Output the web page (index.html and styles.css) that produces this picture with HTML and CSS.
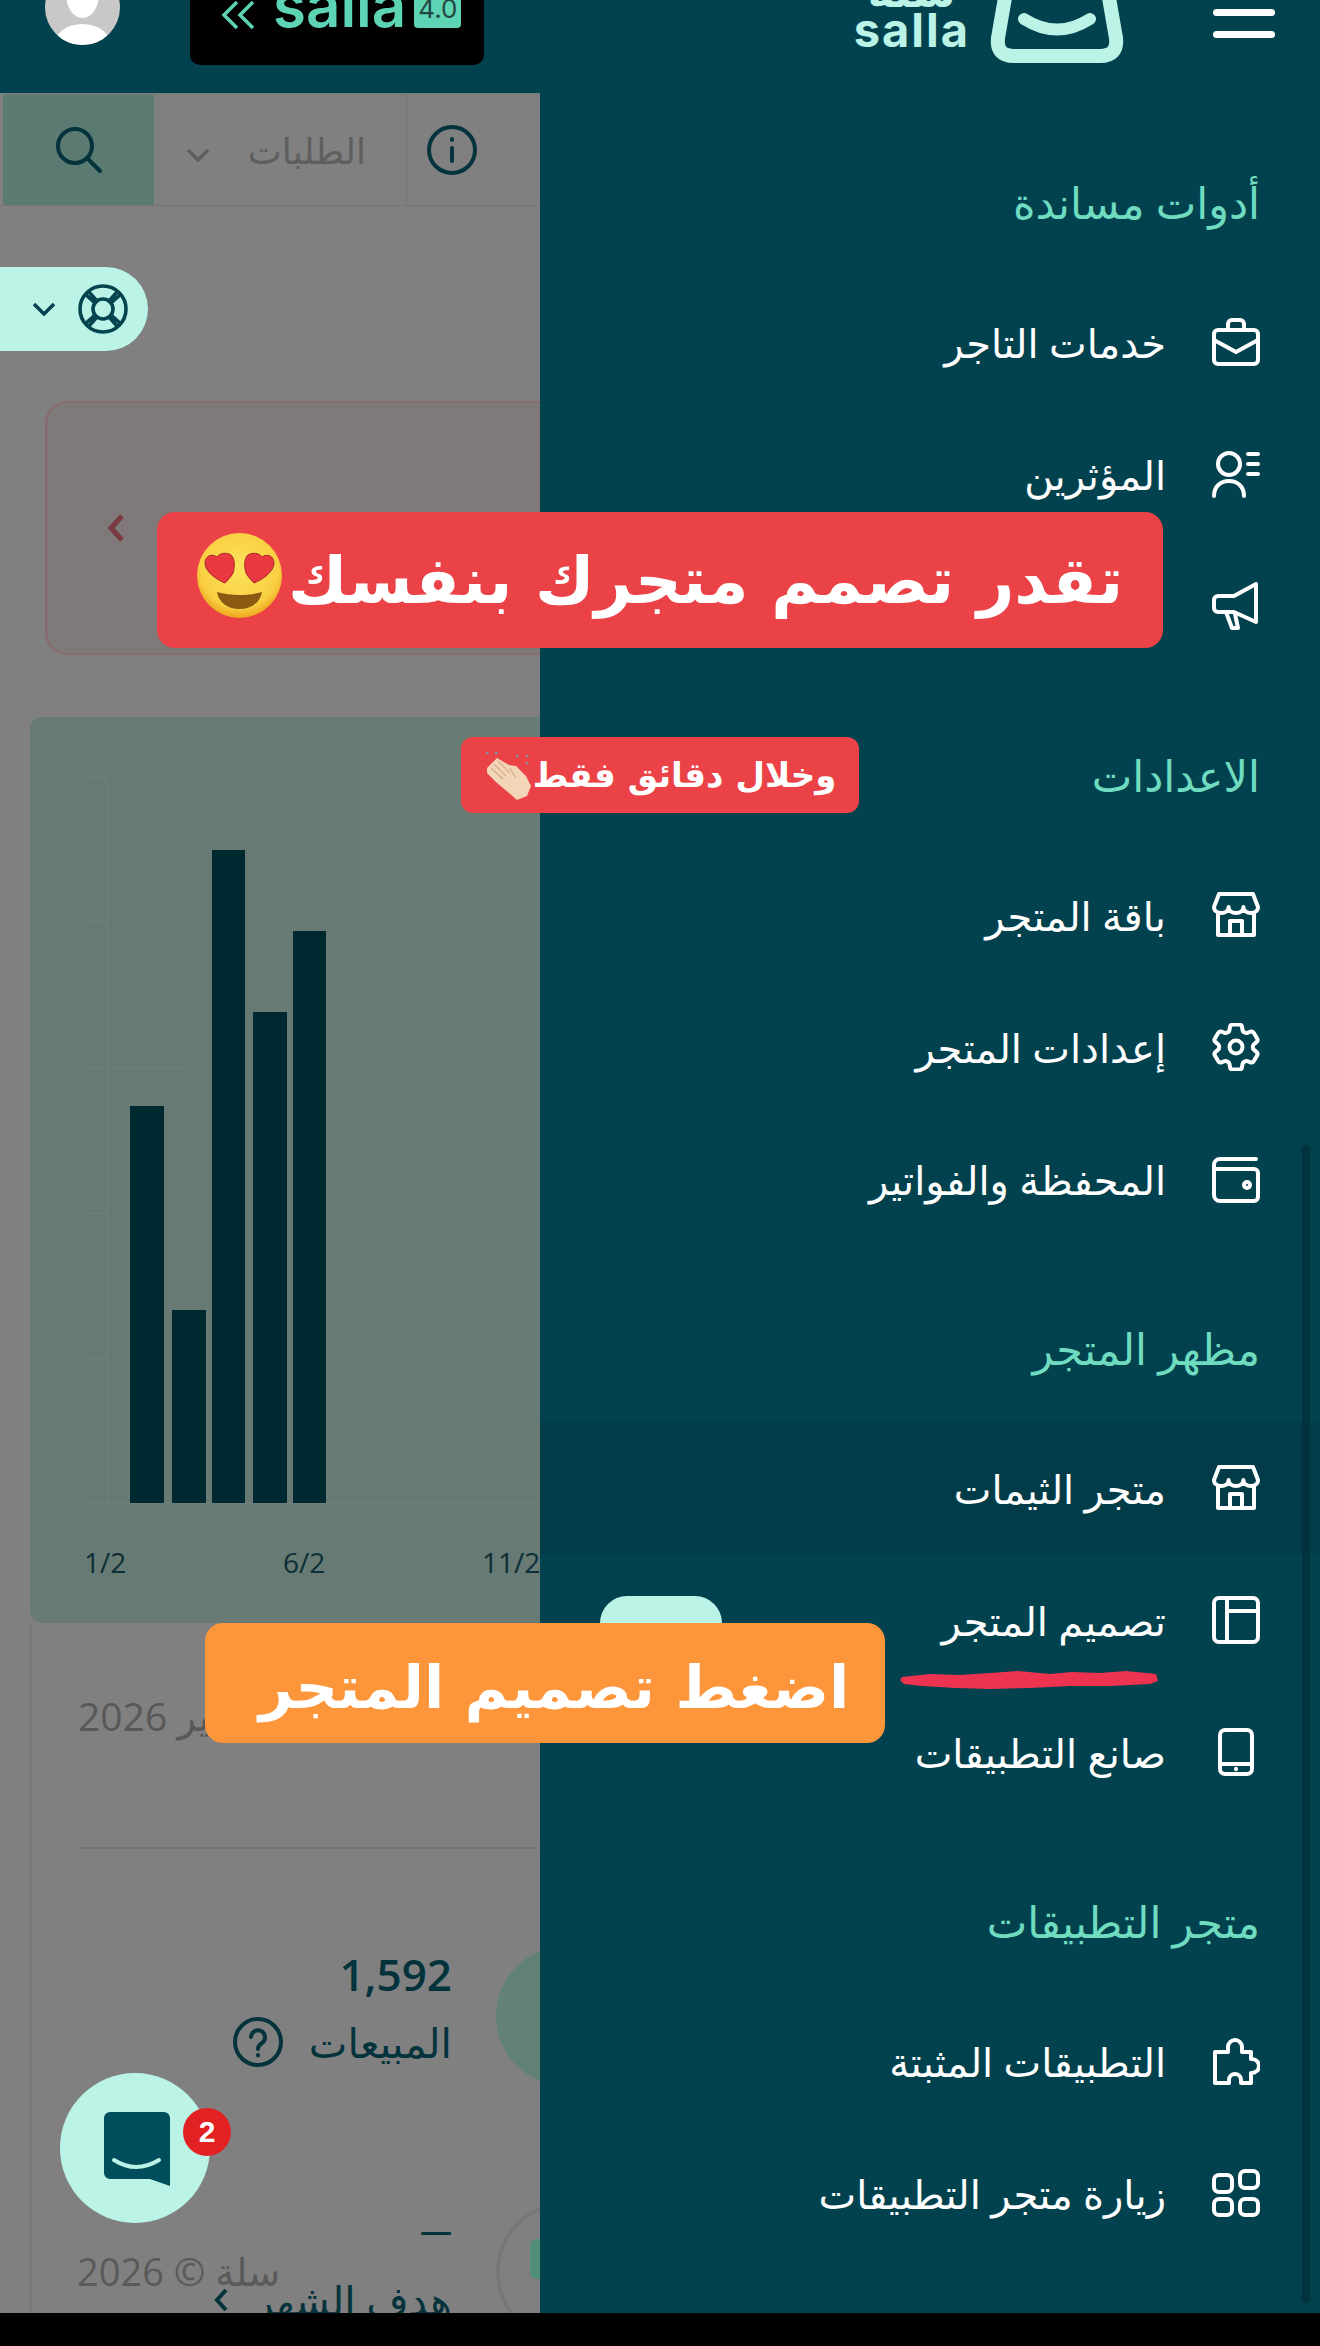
FILE: index.html
```html
<!DOCTYPE html>
<html lang="ar" dir="rtl">
<head>
    <meta charset="UTF-8">
    <meta name="viewport" content="width=device-width, initial-scale=1.0">
    <title>سلة - لوحة التحكم</title>
    <link rel="stylesheet" href="styles.css">
</head>
<body>
    <div class="screen">
        <header class="topbar">
            <div class="burger"><span></span><span></span></div>
            <div class="brand">
                <svg class="brand-bag" viewBox="0 0 134 63" fill="none" stroke="#bcf3e7" stroke-linecap="round">
                    <path stroke-width="14" d="M16 -8L8 38Q6 56 24 56H110Q128 56 126 38L118 -8"/>
                    <path stroke-width="12" d="M34 19Q67 40 100 19"/>
                </svg>
                <div class="brand-words">
                    <span class="brand-ar">سلة</span>
                    <span class="brand-en">salla</span>
                </div>
            </div>
            <div class="version" dir="ltr">
                <svg class="version-arrows" viewBox="0 0 34 30" fill="none" stroke="#5dd5b5" stroke-width="3.500"><path d="M16 1L3 14l13 13M32 1L19 14l13 13"/></svg>
                <span class="version-name">salla</span>
                <span class="version-chip">4.0</span>
            </div>
            <div class="avatar"><span class="avatar-head"></span><span class="avatar-body"></span></div>
        </header>

        <div class="content">
            <aside class="drawer">
                <section class="group">
                    <h3>أدوات مساندة</h3>
                    <a class="item">
                        <svg class="ico" viewBox="0 0 24 24"><path d="M8 6V3a2 2 0 0 1 2-2h4a2 2 0 0 1 2 2v3"/><rect x="1" y="6" width="22" height="17" rx="2"/><path d="M1 11l11 6 11-6"/></svg>
                        <span>خدمات التاجر</span>
                    </a>
                    <a class="item">
                        <svg class="ico" viewBox="0 0 24 24"><circle cx="8.5" cy="7" r="5.500"/><path d="M1 23c0-5 3.500-7.500 7.500-7.500S16 18 16 23"/><path d="M18 2h5M18 7h5M18 12h5"/></svg>
                        <span>المؤثرين</span>
                    </a>
                    <a class="item">
                        <svg class="ico" viewBox="0 0 24 24"><path d="M3 7h8l11-6v19l-11-5H3a2 2 0 0 1-2-2V9a2 2 0 0 1 2-2z"/><path d="M7 15l3 8h3l-1.500-7"/></svg>
                    </a>
                </section>
                <section class="group">
                    <h3>الاعدادات</h3>
                    <a class="item">
                        <svg class="ico" viewBox="0 0 24 24"><path d="M3.500 1.500h17L23 8c0 2-1.700 3-3.600 3s-3.700-1-3.700-3c0 2-1.700 3-3.700 3s-3.700-1-3.700-3c0 2-1.700 3-3.600 3S1 10 1 8z"/><path d="M3 11v11h18V11M9 22v-7h6v7"/></svg>
                        <span>باقة المتجر</span>
                    </a>
                    <a class="item">
                        <svg class="ico" viewBox="2.6 2.4 18.8 19.2"><path stroke-width="1.6" d="M9.594 3.94c.09-.542.56-.94 1.11-.94h2.593c.55 0 1.02.398 1.11.94l.213 1.281c.063.374.313.686.645.87.074.04.147.083.22.127.325.196.72.257 1.075.124l1.217-.456a1.125 1.125 0 0 1 1.37.49l1.296 2.247a1.125 1.125 0 0 1-.26 1.431l-1.003.827c-.293.241-.438.613-.43.992a7.723 7.723 0 0 1 0 .255c-.008.378.137.75.43.991l1.004.827c.424.35.534.955.26 1.43l-1.298 2.247a1.125 1.125 0 0 1-1.369.491l-1.217-.456c-.355-.133-.75-.072-1.076.124a6.47 6.47 0 0 1-.22.128c-.331.183-.581.495-.644.869l-.213 1.281c-.09.543-.56.94-1.11.94h-2.594c-.55 0-1.019-.398-1.11-.94l-.213-1.281c-.062-.374-.312-.686-.644-.87a6.52 6.52 0 0 1-.22-.127c-.325-.196-.72-.257-1.076-.124l-1.217.456a1.125 1.125 0 0 1-1.369-.49l-1.297-2.247a1.125 1.125 0 0 1 .26-1.431l1.004-.827c.292-.24.437-.613.43-.991a6.932 6.932 0 0 1 0-.255c.007-.38-.138-.751-.43-.992l-1.004-.827a1.125 1.125 0 0 1-.26-1.43l1.297-2.247a1.125 1.125 0 0 1 1.37-.491l1.216.456c.356.133.751.072 1.076-.124.072-.044.146-.086.22-.128.332-.183.582-.495.644-.869l.214-1.28Z"/><circle stroke-width="1.6" cx="12" cy="12" r="2.6"/></svg>
                        <span>إعدادات المتجر</span>
                    </a>
                    <a class="item">
                        <svg class="ico" viewBox="0 0 24 24"><path d="M22 2H4a3 3 0 0 0-3 3v15a3 3 0 0 0 3 3h17a2 2 0 0 0 2-2V9a2 2 0 0 0-2-2H1"/><circle cx="17.5" cy="15" r="1.500"/></svg>
                        <span>المحفظة والفواتير</span>
                    </a>
                </section>
                <section class="group">
                    <h3>مظهر المتجر</h3>
                    <a class="item item-active">
                        <svg class="ico" viewBox="0 0 24 24"><path d="M3.500 1.500h17L23 8c0 2-1.700 3-3.600 3s-3.700-1-3.700-3c0 2-1.700 3-3.700 3s-3.700-1-3.700-3c0 2-1.700 3-3.600 3S1 10 1 8z"/><path d="M3 11v11h18V11M9 22v-7h6v7"/></svg>
                        <span>متجر الثيمات</span>
                    </a>
                    <a class="item">
                        <svg class="ico" viewBox="0 0 24 24"><rect x="1" y="1" width="22" height="22" rx="2.500"/><path d="M7.500 1v22M7.500 7.500H23"/></svg>
                        <span>تصميم المتجر</span>
                        <em class="new-tag">جديد</em>
                    </a>
                    <a class="item">
                        <svg class="ico" viewBox="0 0 24 24"><rect x="4" y="1" width="16" height="22" rx="2.500"/><path d="M4 18h16M12 20.4v.2"/></svg>
                        <span>صانع التطبيقات</span>
                    </a>
                </section>
                <section class="group">
                    <h3>متجر التطبيقات</h3>
                    <a class="item">
                        <svg class="ico" viewBox="0 0 24 24"><path d="M1.500 23V7.500H8V5a3.500 3.500 0 1 1 7 0v2.500h4.500V11h.5a3.500 3.500 0 1 1 0 7h-.5v5h-5v-1.500a3 3 0 0 0-6 0V23z"/></svg>
                        <span>التطبيقات المثبتة</span>
                    </a>
                    <a class="item">
                        <svg class="ico" viewBox="0 0 24 24"><rect x="1" y="3" width="9" height="8.500" rx="2.500"/><rect x="14" y="1" width="9" height="8.500" rx="2.500"/><rect x="1" y="15" width="9" height="8" rx="2.500"/><rect x="14" y="15" width="9" height="8" rx="2.500"/></svg>
                        <span>زيارة متجر التطبيقات</span>
                    </a>
                </section>
                <div class="scrollbar"></div>
            </aside>

            <main class="dash">
                <div class="searchbar">
                    <div class="sb-info">
                        <svg viewBox="0 0 50 50" fill="none" stroke="#04333c" stroke-width="4" stroke-linecap="round"><circle cx="25" cy="25" r="23"/><path d="M25 23v13M25 14v1"/></svg>
                    </div>
                    <div class="sb-select">
                        <span>الطلبات</span>
                        <svg viewBox="0 0 24 14" fill="none" stroke="#5e5e5e" stroke-width="3.500"><path d="M2 2l10 10L22 2"/></svg>
                    </div>
                    <div class="sb-btn">
                        <svg viewBox="0 0 46 46" fill="none" stroke="#04333c" stroke-width="4" stroke-linecap="round"><circle cx="19" cy="19" r="17"/><path d="M31 31l13 13"/></svg>
                    </div>
                </div>

                <div class="help-pill">
                    <svg class="help-buoy" viewBox="0 0 50 50" fill="none" stroke="#04444f" stroke-width="3.6"><circle cx="25" cy="25" r="23"/><circle cx="25" cy="25" r="10"/><path d="M10 7l9 10M7 10l10 9M40 7l-9 10M43 10l-10 9M10 43l9-10M7 40l10-9M40 43l-9-10M43 40l-10-9"/></svg>
                    <svg class="help-arrow" viewBox="0 0 24 14" fill="none" stroke="#04444f" stroke-width="3.500"><path d="M2 2l10 10L22 2"/></svg>
                </div>

                <div class="promo">
                    <svg viewBox="0 0 18 30" fill="none" stroke="#7a3a42" stroke-width="5"><path d="M15 3L4 15l11 12"/></svg>
                </div>

                <div class="chart-card">
                    <svg viewBox="30 717 510 906">
                        <path class="chart-axis" d="M107 777V1503H540M88 777h19M88 922h19M88 1068h102M88 1213h19M88 1359h19M88 1503h19"/>
                        <rect class="chart-bar" x="130" y="1106" width="34" height="397"/>
                        <rect class="chart-bar" x="172" y="1310" width="34" height="193"/>
                        <rect class="chart-bar" x="212" y="850" width="33" height="653"/>
                        <rect class="chart-bar" x="253" y="1012" width="34" height="491"/>
                        <rect class="chart-bar" x="293" y="931" width="33" height="572"/>
                        <text class="chart-label" x="84" y="1573">1/2</text>
                        <text class="chart-label" x="283" y="1573">6/2</text>
                        <text class="chart-label" x="482" y="1573">11/2</text>
                    </svg>
                </div>

                <div class="lower">
                    <div class="date-row"><span>فبراير 2026</span></div>
                    <div class="stat stat-sales">
                        <div class="stat-circle"></div>
                        <div class="stat-text">
                            <strong>1,592</strong>
                            <div class="stat-label">
                                <span>المبيعات</span>
                                <svg viewBox="0 0 50 50" fill="none" stroke="#04333c" stroke-width="4" stroke-linecap="round"><circle cx="25" cy="25" r="23"/><path d="M18 20a7 7 0 1 1 11 6c-3 2-4 3-4 6M25 38v.5"/></svg>
                            </div>
                        </div>
                    </div>
                    <div class="stat stat-goal">
                        <div class="stat-ring"><span class="stat-ring-mark"></span></div>
                        <div class="stat-text">
                            <strong>—</strong>
                            <div class="stat-label">
                                <span>هدف الشهر</span>
                                <svg class="goal-arrow" viewBox="0 0 14 24" fill="none" stroke="#04333c" stroke-width="4"><path d="M12 2L3 12l9 10"/></svg>
                            </div>
                        </div>
                    </div>
                    <p class="copyright">سلة © 2026</p>
                </div>
            </main>
        </div>

        <button class="chat">
            <svg viewBox="0 0 66 74"><path fill="#004e5c" d="M6 0h54a6 6 0 0 1 6 6v68l-20-7H6a6 6 0 0 1-6-6V6a6 6 0 0 1 6-6z"/><path fill="none" stroke="#bcf3e7" stroke-width="4" stroke-linecap="round" d="M10 48Q32 62 55 48"/></svg>
            <span class="chat-count">2</span>
        </button>

        <div class="note note-main">
            <span>تقدر تصمم متجرك بنفسك</span>
            <svg class="emoji-love" viewBox="0 0 85 85">
                <defs><radialGradient id="face" cx="50%" cy="42%" r="58%"><stop offset="0%" stop-color="#fde25c"/><stop offset="80%" stop-color="#f9cf42"/><stop offset="100%" stop-color="#eda51c"/></radialGradient></defs>
                <circle cx="42.5" cy="42.5" r="42.5" fill="url(#face)"/>
                <path fill="#ea3840" stroke="#a82a2a" stroke-width="1" d="M28 50C18 46 8 38 8 30C8 23 15 20 20 24C22 20 30 19 34 22C38 25 38 34 36 40C34 44 30 48 28 50Z"/>
                <path fill="#ea3840" stroke="#a82a2a" stroke-width="1" d="M57 50C67 46 77 38 77 30C77 23 70 20 65 24C63 20 55 19 51 22C47 25 47 34 49 40C51 44 55 48 57 50Z"/>
                <path fill="#8a5a12" d="M20 59C34 63 51 63 65 59C63 70 54 76 42.5 76C31 76 22 70 20 59Z"/>
            </svg>
        </div>
        <div class="note note-small">
            <span>وخلال دقائق فقط</span>
            <svg class="emoji-clap" viewBox="0 0 49 51">
                <path fill="#f3d5b8" d="M3 18L13 8L25 15L32 16L42 26L47 36L43 46L33 50L25 43L13 33L3 23Z"/>
                <path fill="none" stroke="#d6ab8b" stroke-width="1.2" d="M7 18L19 29M10 14L22 26M14 11L26 23M26 18L32 28"/>
                <path fill="none" stroke="#8a8f98" stroke-width="2.500" stroke-linecap="round" d="M3 3h.5M12 3h.5M33 6h.5M43 6h.5M43 13h.5"/>
            </svg>
        </div>
        <div class="note note-action"><span>اضغط تصميم المتجر</span></div>
        <svg class="scribble" viewBox="0 0 258 22"><path fill="#ed3350" d="M2 8L30 5L60 6L90 4L118 2L150 5L172 3L200 4L226 2L256 5L258 12L250 15L210 17L170 17L130 19L90 20L56 19L22 17L4 15L0 11Z"/></svg>
    </div>
    <div class="navbar"></div>
</body>
</html>
```

FILE: styles.css
```css
* { box-sizing: border-box; }
html, body { margin: 0; padding: 0; }
body { width: 1320px; height: 2346px; background: #000; overflow: hidden; font-family: "Open Sans", "DejaVu Sans", sans-serif; }
h3, p { margin: 0; font-weight: normal; }

.screen { position: relative; height: 2313px; overflow: hidden; background: #02424f; }

/* top bar, its contents are cut by the top of the screen */
.topbar { height: 93px; display: flex; align-items: flex-end; padding: 0 45px; overflow: hidden; }
.burger { width: 62px; margin-bottom: 55px; display: flex; flex-direction: column; gap: 15px; flex-shrink: 0; }
.burger span { height: 7px; border-radius: 4px; background: #fff; }
.brand { display: flex; align-items: flex-end; gap: 20px; margin: 0 89px 30px 0; }
.brand-bag { width: 134px; height: 63px; flex-shrink: 0; }
.brand-words { display: flex; flex-direction: column; align-items: center; color: #bcf3e7; font-weight: bold; margin-bottom: 13px; }
.brand-ar { font-size: 44px; line-height: 12px; margin-bottom: 14px; }
.brand-en { font-family: "Inter", sans-serif; font-size: 47px; line-height: 40px; letter-spacing: 2px; }
.version { width: 294px; height: 100px; margin: 0 auto 28px 0; background: #000; border-radius: 0 0 10px 10px; display: flex; align-items: flex-end; padding: 0 0 32px 30px; color: #5dd5b5; flex-shrink: 0; }
.version-arrows { width: 36px; height: 30px; margin-bottom: 2px; }
.version-name { margin-left: 17px; font-family: "Inter", sans-serif; font-weight: 600; font-size: 60px; line-height: 56px; }
.version-chip { margin-left: 8px; background: #5dd5b5; color: #24463f; font-family: "Inter", sans-serif; font-size: 26px; padding: 4px 4px; border-radius: 4px; margin-bottom: 5px; }
.avatar { position: relative; width: 75px; height: 75px; border-radius: 50%; background: #c8c8c8; overflow: hidden; margin: 0 70px 48px 0; flex-shrink: 0; }
.avatar-head { position: absolute; left: 21px; top: 0; width: 33px; height: 48px; border-radius: 50%; background: #fff; }
.avatar-body { position: absolute; left: 10px; top: 54px; width: 55px; height: 40px; border-radius: 50%; background: #fff; }

.content { display: flex; height: 2220px; }

/* side menu */
.drawer { position: relative; width: 780px; padding-top: 41px; flex-shrink: 0; background: #02424f; z-index: 2; }
.group { margin-bottom: 35px; }
.group h3 { height: 142px; display: flex; align-items: center; padding: 0 60px 6px; color: #6fdcc0; font-size: 43px; }
.item { position: relative; height: 132px; display: flex; align-items: center; gap: 46px; padding: 0 60px; color: #fff; font-size: 40px; }
.item-active { background: #023c48; }
.ico { width: 48px; height: 48px; flex-shrink: 0; fill: none; stroke: #fff; stroke-width: 2; stroke-linecap: round; stroke-linejoin: round; }
.new-tag { position: absolute; left: 60px; top: 42px; width: 122px; height: 54px; border-radius: 27px; background: #bcf3e7; color: #02424f; font-style: normal; font-size: 24px; text-align: center; line-height: 64px; }
.scrollbar { position: absolute; left: 762px; top: 1052px; width: 8px; height: 1158px; border-radius: 4px; background: #01333f; }

/* dashboard behind the dim layer */
.dash { position: relative; width: 540px; height: 2220px; display: flex; flex-direction: column; background: #808080; overflow: hidden; flex-shrink: 0; }
.searchbar { height: 113px; display: flex; border-top: 2px solid #767f7c; border-bottom: 1px solid #767676; flex-shrink: 0; }
.sb-info { width: 134px; display: flex; align-items: center; justify-content: center; border-left: 1px solid #767676; padding-right: 44px; }
.sb-info svg { width: 50px; height: 50px; }
.sb-select { flex: 1; display: flex; align-items: center; justify-content: space-between; padding: 0 40px 0 32px; color: #5e5e5e; font-size: 36px; }
.sb-select svg { width: 24px; height: 14px; margin-top: 10px; }
.sb-btn { width: 151px; margin-left: 3px; background: #5b7b72; display: flex; align-items: center; justify-content: center; }
.sb-btn svg { width: 46px; height: 46px; }

.help-pill { align-self: flex-end; width: 148px; height: 84px; margin-top: 61px; padding-right: 20px; background: #bcf3e7; border-radius: 0 42px 42px 0; display: flex; align-items: center; gap: 22px; flex-shrink: 0; }
.help-buoy { width: 50px; height: 50px; }
.help-arrow { width: 24px; height: 14px; }

.promo { width: 495px; height: 254px; margin-top: 50px; align-self: flex-start; background: #7f7a79; border: 2px solid #8a6a6f; border-right: 0; border-radius: 22px 0 0 22px; display: flex; align-items: center; justify-content: flex-end; padding-left: 60px; flex-shrink: 0; }
.promo svg { width: 18px; height: 30px; }

.chart-card { width: 510px; height: 906px; margin-top: 62px; align-self: flex-start; background: #677a73; border-radius: 12px 0 0 12px; flex-shrink: 0; }
.chart-card svg { display: block; width: 510px; height: 906px; }
.chart-axis { fill: none; stroke: #6b7e77; stroke-width: 2; }
.chart-bar { fill: #002830; }
.chart-label { font-family: "Open Sans", sans-serif; font-size: 28px; fill: #0d2f36; direction: ltr; }

.lower { position: relative; flex: 1; width: 510px; align-self: flex-start; border-left: 2px solid #797979; }
.date-row { height: 226px; margin-left: 46px; padding-top: 66px; border-bottom: 2px solid #767676; color: #585858; font-size: 39px; }
.date-row span { display: block; width: 340px; white-space: nowrap; margin-right: auto; text-align: left; }
.stat { display: flex; gap: 44px; height: 140px; }
.stat-sales { margin-top: 97px; }
.stat-goal { margin-top: 116px; }
.stat-circle, .stat-ring { position: relative; width: 140px; height: 140px; border-radius: 50%; margin-right: -96px; flex-shrink: 0; }
.stat-circle { background: #628276; }
.stat-ring { border: 4px solid #777; }
.stat-ring-mark { position: absolute; left: 30px; top: 33px; width: 14px; height: 40px; border-radius: 7px; background: #4f8f78; }
.stat-text { display: flex; flex-direction: column; color: #04333c; }
.stat-text strong { font-weight: 600; font-size: 44px; line-height: 56px; }
.stat-label { display: flex; align-items: center; gap: 26px; font-size: 41px; margin-top: 12px; }
.stat-label svg { width: 50px; height: 50px; }
.stat-label .goal-arrow { width: 14px; height: 24px; }
.stat-goal .stat-text strong { font-size: 32px; line-height: 40px; margin-top: 8px; }
.stat-goal .stat-label { margin-top: 22px; }
.copyright { position: absolute; left: 45px; top: 622px; color: #5a5a5a; font-size: 38px; white-space: nowrap; }

/* chat button */
.chat { position: absolute; left: 60px; top: 2073px; width: 150px; height: 150px; border: 0; border-radius: 50%; background: #bcf3e7; z-index: 3; }
.chat svg { position: absolute; left: 44px; top: 39px; width: 66px; height: 74px; }
.chat-count { position: absolute; left: 123px; top: 35px; width: 48px; height: 48px; border-radius: 50%; background: #e12122; color: #fff; font-family: "Liberation Sans", sans-serif; font-weight: bold; font-size: 30px; line-height: 48px; text-align: center; }

/* hand-made notes on top of the screenshot */
.note { position: absolute; z-index: 4; display: flex; align-items: center; justify-content: center; color: #fff; font-family: "DejaVu Sans", sans-serif; font-weight: bold; white-space: nowrap; }
.note-main { left: 157px; top: 512px; width: 1006px; height: 136px; gap: 6px; border-radius: 18px; background: #ea4246; font-size: 65px; }
.emoji-love { width: 85px; height: 85px; margin-bottom: 10px; }
.note-small { left: 461px; top: 737px; width: 398px; height: 76px; border-radius: 12px; background: #ea4246; font-size: 34px; }
.emoji-clap { width: 49px; height: 51px; }
.note-action { left: 205px; top: 1623px; width: 680px; height: 120px; padding: 8px 0 0 18px; border-radius: 18px; background: #fd953a; font-size: 59px; }
.scribble { position: absolute; z-index: 4; left: 900px; top: 1669px; width: 258px; height: 22px; }
.navbar { height: 33px; background: #000; }
```
